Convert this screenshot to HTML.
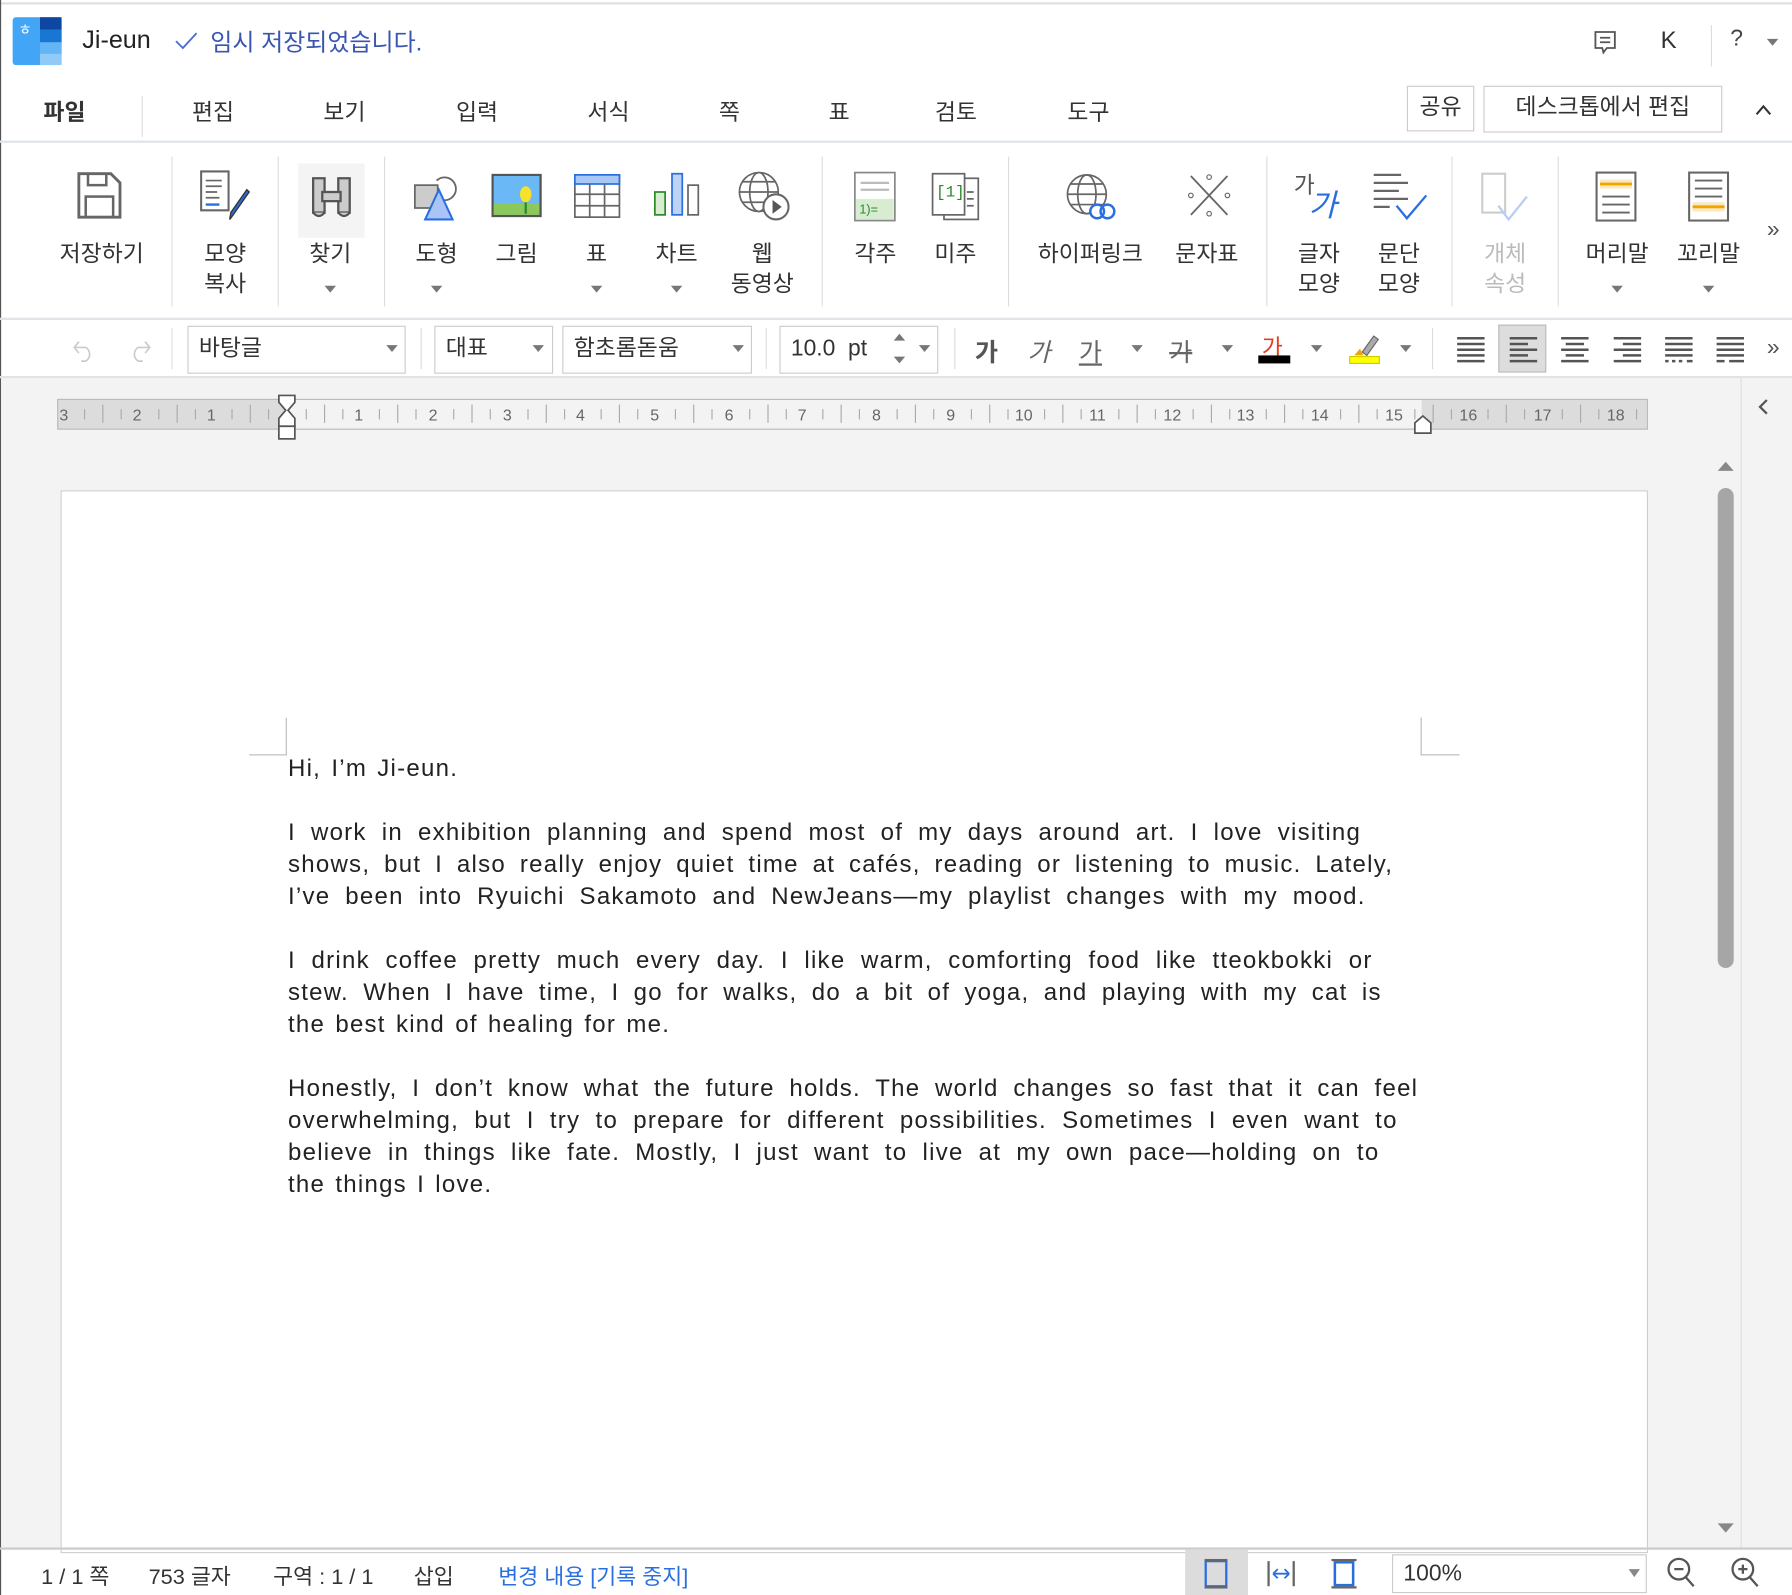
<!DOCTYPE html>
<html><head><meta charset="utf-8">
<style>
html,body{margin:0;padding:0;width:1792px;height:1595px;overflow:hidden;background:#fff}
#w{position:absolute;left:0;top:0;width:1568px;height:1396px;transform:scale(1.142857);transform-origin:0 0;font-family:"Liberation Sans","Noto Sans CJK KR",sans-serif;color:#333}
.a{position:absolute}
.t{position:absolute;white-space:nowrap}
.m{font-size:20px;top:82px;color:#333}
.lbl{position:absolute;font-size:20px;color:#333;text-align:center;line-height:26px;white-space:nowrap;transform:translateX(-50%)}
.vd{position:absolute;width:1px;background:#ddd}
.ar{position:absolute;width:0;height:0;border-left:5px solid transparent;border-right:5px solid transparent;border-top:6px solid #777}
.box{position:absolute;border:1px solid #ccc;background:#fff;box-sizing:border-box;font-size:20px;padding-left:9px;line-height:38px}
.doc{position:absolute;left:252px;width:989px;font-size:21px;color:#222;line-height:28px;letter-spacing:1.1px;word-spacing:2px;font-family:"Liberation Sans","Noto Sans CJK KR",sans-serif}
.j{text-align:justify;text-align-last:justify;white-space:nowrap}
.st{position:absolute;top:1365px;font-size:19px;color:#333;white-space:nowrap}
</style></head><body><div id="w">
<div class="a" style="left:0;top:2px;width:1568px;height:2px;background:#e0e0e0"></div>
<div class="a" style="left:0;top:0;width:1px;height:1396px;background:#555"></div>
<svg class="a" style="left:11px;top:15px" width="43" height="42"><rect x="0" y="0" width="43" height="42" rx="3" fill="#42a5f5"/><rect x="24" y="0" width="19" height="11" fill="#0d47a1"/><rect x="24" y="11" width="19" height="11" fill="#1976d2"/><rect x="24" y="22" width="19" height="10" fill="#64b5f6"/><rect x="24" y="32" width="19" height="10" fill="#90caf9"/><text x="5" y="15" font-size="13" fill="#fff" font-family="Liberation Sans">ㅎ</text></svg>
<div class="t" style="left:72px;top:22px;font-size:22px;color:#222">Ji-eun</div>
<svg class="a" style="left:152px;top:27px" width="22" height="18"><path d="M2 9l6 6 12-13" stroke="#4a6fd6" stroke-width="1.6" fill="none"/></svg>
<div class="t" style="left:184px;top:21px;font-size:21px;color:#3a56b0">임시 저장되었습니다.</div>
<svg class="a" style="left:1393px;top:25px" width="24" height="24"><path d="M3 3h17v14h-7l-3 4-1-4H3z" stroke="#555" stroke-width="1.6" fill="none"/><path d="M7 8h9M7 12h9" stroke="#555" stroke-width="1.5"/></svg>
<div class="t" style="left:1453px;top:24px;font-size:21px;color:#333">K</div>
<div class="vd" style="left:1497px;top:22px;height:36px"></div>
<div class="t" style="left:1514px;top:23px;font-size:20px;color:#444">?</div>
<div class="ar" style="left:1546px;top:34px"></div>
<div class="t m" style="left:38px;font-weight:bold;color:#333">파일</div>
<div class="vd" style="left:124px;top:84px;height:36px"></div>
<div class="t m" style="left:168px">편집</div>
<div class="t m" style="left:283px">보기</div>
<div class="t m" style="left:399px">입력</div>
<div class="t m" style="left:514px">서식</div>
<div class="t m" style="left:629px">쪽</div>
<div class="t m" style="left:725px">표</div>
<div class="t m" style="left:818px">검토</div>
<div class="t m" style="left:934px">도구</div>
<div class="a" style="left:1231px;top:75px;width:59px;height:40px;border:1px solid #ccc;box-sizing:border-box;font-size:20px;text-align:center;line-height:36px">공유</div>
<div class="a" style="left:1298px;top:75px;width:209px;height:41px;border:1px solid #ccc;box-sizing:border-box;font-size:20px;text-align:center;line-height:36px">데스크톱에서 편집</div>
<svg class="a" style="left:1535px;top:90px" width="16" height="12"><path d="M2 10l6-7 6 7" stroke="#333" stroke-width="1.8" fill="none"/></svg>
<div class="a" style="left:0;top:123px;width:1568px;height:2px;background:#e0e3e8"></div>
<div class="vd" style="left:150px;top:137px;height:131px"></div>
<div class="vd" style="left:243px;top:137px;height:131px"></div>
<div class="vd" style="left:336px;top:137px;height:131px"></div>
<div class="vd" style="left:719px;top:137px;height:131px"></div>
<div class="vd" style="left:882px;top:137px;height:131px"></div>
<div class="vd" style="left:1108px;top:137px;height:131px"></div>
<div class="vd" style="left:1270px;top:137px;height:131px"></div>
<div class="vd" style="left:1363px;top:137px;height:131px"></div>
<svg class="a" style="left:67px;top:150px" width="42" height="42"><path d="M2 2h28l8 8v30H2z" fill="#fff" stroke="#666" stroke-width="2.5"/><rect x="10" y="2" width="16" height="10" fill="none" stroke="#666" stroke-width="2.2"/><rect x="8" y="22" width="24" height="18" fill="none" stroke="#666" stroke-width="2.2"/></svg>
<svg class="a" style="left:174px;top:148px" width="50" height="46"><path d="M2 2h24v34H2z" fill="#fff" stroke="#666" stroke-width="1.8"/><path d="M6 10h14M6 15h14M6 20h10M6 25h12" stroke="#666" stroke-width="1.5"/><path d="M6 31h12" stroke="#2a6fe0" stroke-width="2"/><path d="M44 20l-14 20-3 4 1-6 14-20z" fill="#2a6fe0" stroke="#333" stroke-width="1.2"/></svg>
<div class="a" style="left:261px;top:143px;width:58px;height:65px;background:#f4f4f4"></div>
<svg class="a" style="left:270px;top:150px" width="40" height="44"><path d="M4 6h10v30H4zM26 6h10v30H26z" fill="#ccc" stroke="#555" stroke-width="2"/><rect x="12" y="18" width="16" height="8" fill="#ccc" stroke="#555" stroke-width="2"/><path d="M4 36q5 6 10 0M26 36q5 6 10 0" stroke="#555" stroke-width="2" fill="#ccc"/></svg>
<svg class="a" style="left:360px;top:150px" width="46" height="44"><rect x="3" y="12" width="20" height="20" fill="#ccc" stroke="#666" stroke-width="1.5"/><path d="M22 8a10 10 0 1 1 5 17" stroke="#666" stroke-width="1.6" fill="none"/><path d="M24 16l-12 26h24z" fill="#a9c4f5" stroke="#2a6fe0" stroke-width="1.8"/></svg>
<svg class="a" style="left:430px;top:152px" width="46" height="40"><rect x="1" y="1" width="42" height="36" fill="#6ab8f5" stroke="#555" stroke-width="2"/><rect x="2" y="26" width="40" height="10" fill="#8cc85a"/><ellipse cx="30" cy="18" rx="5" ry="7" fill="#f7e22b"/><path d="M30 25v10" stroke="#2a8a2a" stroke-width="2"/></svg>
<svg class="a" style="left:502px;top:152px" width="42" height="40"><rect x="1" y="1" width="39" height="37" fill="#fff" stroke="#666" stroke-width="1.5"/><rect x="1" y="1" width="39" height="8" fill="#a8c8f5" stroke="#2a6fe0" stroke-width="1.5"/><path d="M14 9v29M27 9v29M1 18h39M1 28h39" stroke="#666" stroke-width="1.5"/></svg>
<svg class="a" style="left:571px;top:150px" width="44" height="40"><rect x="2" y="18" width="9" height="20" fill="#d7ecd1" stroke="#2a8a2a" stroke-width="1.5"/><rect x="17" y="2" width="9" height="36" fill="#bcd3f5" stroke="#2a6fe0" stroke-width="1.5"/><rect x="31" y="12" width="9" height="26" fill="#fff" stroke="#666" stroke-width="1.5"/></svg>
<svg class="a" style="left:644px;top:148px" width="50" height="48"><circle cx="20" cy="20" r="17" fill="none" stroke="#666" stroke-width="1.5"/><ellipse cx="20" cy="20" rx="8" ry="17" fill="none" stroke="#666" stroke-width="1.5"/><path d="M3 20h34M6 11h28M6 29h28" stroke="#666" stroke-width="1.5"/><circle cx="35" cy="33" r="11" fill="#fff" stroke="#666" stroke-width="1.8"/><path d="M32 27l8 6-8 6z" fill="#555"/></svg>
<svg class="a" style="left:747px;top:150px" width="38" height="44"><rect x="1" y="1" width="35" height="42" fill="#fff" stroke="#888" stroke-width="1.5"/><path d="M6 10h25M6 16h25" stroke="#bbb" stroke-width="2"/><rect x="2" y="24" width="33" height="18" fill="#d7ecd1"/><text x="5" y="37" font-size="11" fill="#2a8a2a" font-family="Liberation Sans">1)=</text></svg>
<svg class="a" style="left:814px;top:150px" width="44" height="44"><rect x="12" y="6" width="30" height="36" fill="#fff" stroke="#666" stroke-width="1.5"/><rect x="2" y="2" width="28" height="36" fill="#fff" stroke="#666" stroke-width="1.5"/><text x="5" y="22" font-size="14" fill="#2a8a2a" font-family="Liberation Mono">[1]</text><path d="M32 18h6M32 24h6M32 30h6" stroke="#666" stroke-width="1.5"/></svg>
<svg class="a" style="left:931px;top:150px" width="48" height="46"><circle cx="20" cy="20" r="17" fill="none" stroke="#666" stroke-width="1.5"/><ellipse cx="20" cy="20" rx="8" ry="17" fill="none" stroke="#666" stroke-width="1.5"/><path d="M3 20h34M6 11h28M6 29h28" stroke="#666" stroke-width="1.5"/><ellipse cx="29" cy="35" rx="6" ry="6" fill="#fff" stroke="#2a6fe0" stroke-width="2.2"/><ellipse cx="38" cy="35" rx="6" ry="6" fill="none" stroke="#2a6fe0" stroke-width="2.2"/></svg>
<svg class="a" style="left:1038px;top:150px" width="40" height="42"><path d="M4 4l32 34M36 4L4 38" stroke="#666" stroke-width="1.6"/><circle cx="20" cy="5" r="2" fill="none" stroke="#666"/><circle cx="20" cy="37" r="2" fill="none" stroke="#666"/><circle cx="4" cy="21" r="2" fill="none" stroke="#666"/><circle cx="36" cy="21" r="2" fill="none" stroke="#666"/></svg>
<div class="t" style="left:1132px;top:146px;font-size:20px;color:#555">가</div>
<div class="t" style="left:1145px;top:158px;font-size:27px;color:#2a6fe0;font-style:italic">가</div>
<svg class="a" style="left:1200px;top:150px" width="52" height="44"><path d="M2 3h24M2 10h30M2 17h22M2 24h30M2 31h14" stroke="#666" stroke-width="2"/><path d="M22 30l9 11 17-20" stroke="#2a6fe0" stroke-width="2" fill="none"/></svg>
<svg class="a" style="left:1295px;top:150px" width="48" height="46"><path d="M2 2h20v34H2z" fill="none" stroke="#ccc" stroke-width="1.8"/><path d="M16 30l9 12 16-20" stroke="#b8cdf2" stroke-width="2" fill="none"/></svg>
<svg class="a" style="left:1396px;top:150px" width="38" height="44"><rect x="1" y="1" width="34" height="42" fill="#fff" stroke="#666" stroke-width="1.8"/><rect x="4" y="7" width="28" height="8" fill="#fbe8bd"/><path d="M4 11h28" stroke="#f0a500" stroke-width="2.5"/><path d="M6 22h24M6 29h24M6 36h24" stroke="#666" stroke-width="1.6"/></svg>
<svg class="a" style="left:1477px;top:150px" width="38" height="44"><rect x="1" y="1" width="34" height="42" fill="#fff" stroke="#666" stroke-width="1.8"/><path d="M6 8h24M6 15h24M6 22h24" stroke="#666" stroke-width="1.6"/><rect x="4" y="27" width="28" height="8" fill="#fbe8bd"/><path d="M4 31h28" stroke="#f0a500" stroke-width="2.5"/></svg>
<div class="t" style="left:1546px;top:190px;font-size:20px;color:#555">»</div>
<div class="lbl" style="left:89px;top:210px">저장하기</div>
<div class="lbl" style="left:197px;top:210px">모양<br>복사</div>
<div class="lbl" style="left:289px;top:210px">찾기</div><div class="ar" style="left:284px;top:250px"></div>
<div class="lbl" style="left:382px;top:210px">도형</div><div class="ar" style="left:377px;top:250px"></div>
<div class="lbl" style="left:452px;top:210px">그림</div>
<div class="lbl" style="left:522px;top:210px">표</div><div class="ar" style="left:517px;top:250px"></div>
<div class="lbl" style="left:592px;top:210px">차트</div><div class="ar" style="left:587px;top:250px"></div>
<div class="lbl" style="left:667px;top:210px">웹<br>동영상</div>
<div class="lbl" style="left:766px;top:210px">각주</div>
<div class="lbl" style="left:836px;top:210px">미주</div>
<div class="lbl" style="left:954px;top:210px">하이퍼링크</div>
<div class="lbl" style="left:1056px;top:210px">문자표</div>
<div class="lbl" style="left:1154px;top:210px">글자<br>모양</div>
<div class="lbl" style="left:1224px;top:210px">문단<br>모양</div>
<div class="lbl" style="left:1317px;top:210px;color:#bbb">개체<br>속성</div>
<div class="lbl" style="left:1415px;top:210px">머리말</div><div class="ar" style="left:1410px;top:250px"></div>
<div class="lbl" style="left:1495px;top:210px">꼬리말</div><div class="ar" style="left:1490px;top:250px"></div>
<div class="a" style="left:0;top:278px;width:1568px;height:2px;background:#e0e3e8"></div>
<svg class="a" style="left:63px;top:293px" width="70" height="24"><path d="M6 6l-4 5 4 5M2 11h10a7 7 0 0 1 0 12H8" stroke="#ccc" stroke-width="1.5" fill="none"/><path d="M64 6l4 5-4 5M68 11H58a7 7 0 0 0 0 12h4" stroke="#ccc" stroke-width="1.5" fill="none"/></svg>
<div class="vd" style="left:150px;top:287px;height:36px"></div>
<div class="box" style="left:164px;top:285px;width:191px;height:42px">바탕글</div><div class="ar" style="left:338px;top:302px"></div>
<div class="vd" style="left:368px;top:287px;height:36px"></div>
<div class="box" style="left:380px;top:285px;width:104px;height:42px">대표</div><div class="ar" style="left:466px;top:302px"></div>
<div class="box" style="left:492px;top:285px;width:166px;height:42px">함초롬돋움</div><div class="ar" style="left:641px;top:302px"></div>
<div class="vd" style="left:670px;top:287px;height:36px"></div>
<div class="box" style="left:682px;top:285px;width:139px;height:42px">10.0&nbsp; pt</div>
<svg class="a" style="left:781px;top:290px" width="12" height="30"><path d="M1 8l5-6 5 6zM1 22l5 6 5-6z" fill="#777"/></svg><div class="ar" style="left:804px;top:302px"></div>
<div class="vd" style="left:835px;top:287px;height:36px"></div>
<div class="t" style="left:853px;top:291px;font-size:22px;color:#555;font-weight:bold">가</div>
<div class="t" style="left:899px;top:291px;font-size:22px;color:#666;font-style:italic">가</div>
<div class="t" style="left:944px;top:291px;font-size:22px;color:#666;text-decoration:underline">가</div><div class="ar" style="left:990px;top:302px"></div>
<div class="t" style="left:1023px;top:291px;font-size:22px;color:#666;text-decoration:line-through">가</div><div class="ar" style="left:1069px;top:302px"></div>
<div class="t" style="left:1104px;top:288px;font-size:20px;color:#e04020">가</div><div class="a" style="left:1101px;top:311px;width:28px;height:7px;background:#000"></div><div class="ar" style="left:1147px;top:302px"></div>
<svg class="a" style="left:1180px;top:290px" width="30" height="30"><path d="M12 18l10-14 4 3-10 14z" fill="#aaa" stroke="#666"/><path d="M5 21l5-6 3 6z" fill="#f0a500"/><rect x="1" y="22" width="26" height="6" fill="#ff0" stroke="#cc0"/></svg><div class="ar" style="left:1225px;top:302px"></div>
<div class="vd" style="left:1253px;top:287px;height:36px"></div>
<div class="a" style="left:1311px;top:284px;width:42px;height:42px;background:#ddd;border:1px solid #bbb;box-sizing:border-box"></div>
<svg class="a" style="left:1273px;top:293px" width="260" height="26"><g stroke="#555" stroke-width="2.2"><path d="M2 3h24M2 8h24M2 13h24M2 18h24M2 23h24"/><path d="M48 3h24M48 8h16M48 13h24M48 18h16M48 23h24"/><path d="M93 3h24M97 8h16M93 13h24M97 18h16M93 23h24"/><path d="M139 3h24M147 8h16M139 13h24M147 18h16M139 23h24"/><path d="M184 3h24M184 8h24M184 13h24M184 18h24M184 23h3M190 23h3M196 23h3M203 23h5"/><path d="M229 3h24M229 8h24M229 13h24M229 18h24M229 23h7M240 23h13"/></g></svg>
<div class="t" style="left:1546px;top:293px;font-size:20px;color:#555">»</div>
<div class="a" style="left:0;top:329px;width:1568px;height:2px;background:#e0e3e8"></div>
<div class="a" style="left:1px;top:331px;width:1567px;height:1024px;background:#f3f3f3"></div>
<div class="vd" style="left:1523px;top:331px;height:1024px;background:#ddd"></div>
<svg class="a" style="left:1537px;top:348px" width="12" height="16"><path d="M9 2l-6 6 6 6" stroke="#555" stroke-width="2" fill="none"/></svg>
<div class="a" style="left:50px;top:349px;width:1392px;height:27px;background:#dcdcdc;border:1px solid #bbb;box-sizing:border-box"></div>
<div class="a" style="left:251px;top:350px;width:993px;height:25px;background:#f3f3f3"></div>
<svg class="a" style="left:50px;top:349px" width="1392" height="27">
<g font-size="14" fill="#666" font-family="Liberation Sans">
<text x="2" y="19">3</text><text x="66" y="19">2</text><text x="131" y="19">1</text>
<text x="260" y="19">1</text><text x="325" y="19">2</text><text x="390" y="19">3</text><text x="454" y="19">4</text><text x="519" y="19">5</text><text x="584" y="19">6</text><text x="648" y="19">7</text><text x="713" y="19">8</text><text x="778" y="19">9</text><text x="838" y="19">10</text><text x="903" y="19">11</text><text x="968" y="19">12</text><text x="1032" y="19">13</text><text x="1097" y="19">14</text><text x="1162" y="19">15</text><text x="1227" y="19">16</text><text x="1292" y="19">17</text><text x="1356" y="19">18</text></g>
<g stroke="#aaa" stroke-width="1">
<path d="M24 9v9M40 5v16M56 9v9M89 9v9M105 5v16M121 9v9M153 9v9M169 5v16M185 9v9M218 9v9M234 5v16M250 9v9M282 9v9M298 5v16M314 9v9M347 9v9M363 5v16M379 9v9M412 9v9M428 5v16M444 9v9M476 9v9M492 5v16M508 9v9M541 9v9M557 5v16M573 9v9M606 9v9M622 5v16M638 9v9M670 9v9M686 5v16M702 9v9M735 9v9M751 5v16M767 9v9M800 9v9M816 5v16M832 9v9M864 9v9M880 5v16M896 9v9M929 9v9M945 5v16M961 9v9M994 9v9M1010 5v16M1026 9v9M1058 9v9M1074 5v16M1090 9v9M1123 9v9M1139 5v16M1155 9v9M1188 9v9M1204 5v16M1220 9v9M1252 9v9M1268 5v16M1284 9v9M1317 9v9M1333 5v16M1349 9v9M1382 9v9"/></g></svg>
<svg class="a" style="left:242px;top:345px" width="18" height="42"><path d="M2 1h14v6l-6 7 6 7v7H2v-7l6-7-6-7z" fill="#fff" stroke="#555" stroke-width="1.5"/><rect x="2" y="28" width="14" height="11" fill="#fff" stroke="#555" stroke-width="1.5"/></svg>
<svg class="a" style="left:1236px;top:362px" width="18" height="18"><path d="M2 17V8l7-6 7 6v9z" fill="#fff" stroke="#555" stroke-width="1.5"/></svg>
<svg class="a" style="left:1502px;top:402px" width="16" height="12"><path d="M1 10l7-8 7 8z" fill="#888"/></svg>
<div class="a" style="left:1503px;top:427px;width:14px;height:420px;background:#a6a6a6;border-radius:7px"></div>
<svg class="a" style="left:1502px;top:1331px" width="16" height="12"><path d="M1 2l7 8 7-8z" fill="#888"/></svg>
<div class="a" style="left:53px;top:429px;width:1389px;height:930px;background:#fff;border:1px solid #d0d0d0;box-sizing:border-box"></div>
<div class="a" style="left:250px;top:628px;width:1px;height:33px;background:#bbb"></div>
<div class="a" style="left:218px;top:660px;width:33px;height:1px;background:#bbb"></div>
<div class="a" style="left:1243px;top:628px;width:1px;height:33px;background:#bbb"></div>
<div class="a" style="left:1243px;top:660px;width:34px;height:1px;background:#bbb"></div>
<div class="doc" style="top:659px">Hi, I’m Ji-eun.</div>
<div class="doc" style="top:715px;width:939px"><div class="j">I work in exhibition planning and spend most of my days around art. I love visiting</div><div class="j" style="width:967px">shows, but I also really enjoy quiet time at cafés, reading or listening to music. Lately,</div><div class="j" style="width:943px">I’ve been into Ryuichi Sakamoto and NewJeans—my playlist changes with my mood.</div></div>
<div class="doc" style="top:827px;width:949px"><div class="j">I drink coffee pretty much every day. I like warm, comforting food like tteokbokki or</div><div class="j" style="width:957px">stew. When I have time, I go for walks, do a bit of yoga, and playing with my cat is</div><div>the best kind of healing for me.</div></div>
<div class="doc" style="top:939px;width:989px"><div class="j">Honestly, I don’t know what the future holds. The world changes so fast that it can feel</div><div class="j" style="width:971px">overwhelming, but I try to prepare for different possibilities. Sometimes I even want to</div><div class="j" style="width:955px">believe in things like fate. Mostly, I just want to live at my own pace—holding on to</div><div>the things I love.</div></div>
<div class="a" style="left:0;top:1354px;width:1568px;height:2px;background:#ccc"></div>
<div class="st" style="left:36px">1 / 1 쪽</div>
<div class="st" style="left:130px">753 글자</div>
<div class="st" style="left:239px">구역 : 1 / 1</div>
<div class="st" style="left:362px">삽입</div>
<div class="st" style="left:436px;color:#2a6fe0">변경 내용 [기록 중지]</div>
<div class="a" style="left:1037px;top:1356px;width:55px;height:40px;background:#dcdcdc"></div>
<svg class="a" style="left:1053px;top:1364px" width="150" height="26"><rect x="2" y="2" width="18" height="22" fill="none" stroke="#2a6fe0" stroke-width="2"/><path d="M1 1h20M1 25h20" stroke="#666" stroke-width="2"/><path d="M57 2v22M79 2v22" stroke="#666" stroke-width="2"/><path d="M61 13h14M61 13l4-4M61 13l4 4M75 13l-4-4M75 13l-4 4" stroke="#2a6fe0" stroke-width="1.6"/><rect x="115" y="3" width="16" height="20" fill="none" stroke="#2a6fe0" stroke-width="2.2"/><path d="M112 1h22M112 25h22" stroke="#666" stroke-width="2"/></svg>
<div class="a" style="left:1218px;top:1360px;width:223px;height:34px;border:1px solid #ccc;box-sizing:border-box;font-size:20px;line-height:32px;padding-left:9px">100%</div>
<svg class="a" style="left:1424px;top:1372px" width="12" height="10"><path d="M1 1l5 7 5-7z" fill="#888"/></svg>
<svg class="a" style="left:1457px;top:1362px" width="90" height="30"><circle cx="12" cy="11" r="9" fill="none" stroke="#555" stroke-width="2"/><path d="M18 18l7 8M8 11h8" stroke="#555" stroke-width="2"/><circle cx="68" cy="11" r="9" fill="none" stroke="#555" stroke-width="2"/><path d="M74 18l7 8M64 11h8M68 7v8" stroke="#555" stroke-width="2"/></svg>
</div></body></html>
